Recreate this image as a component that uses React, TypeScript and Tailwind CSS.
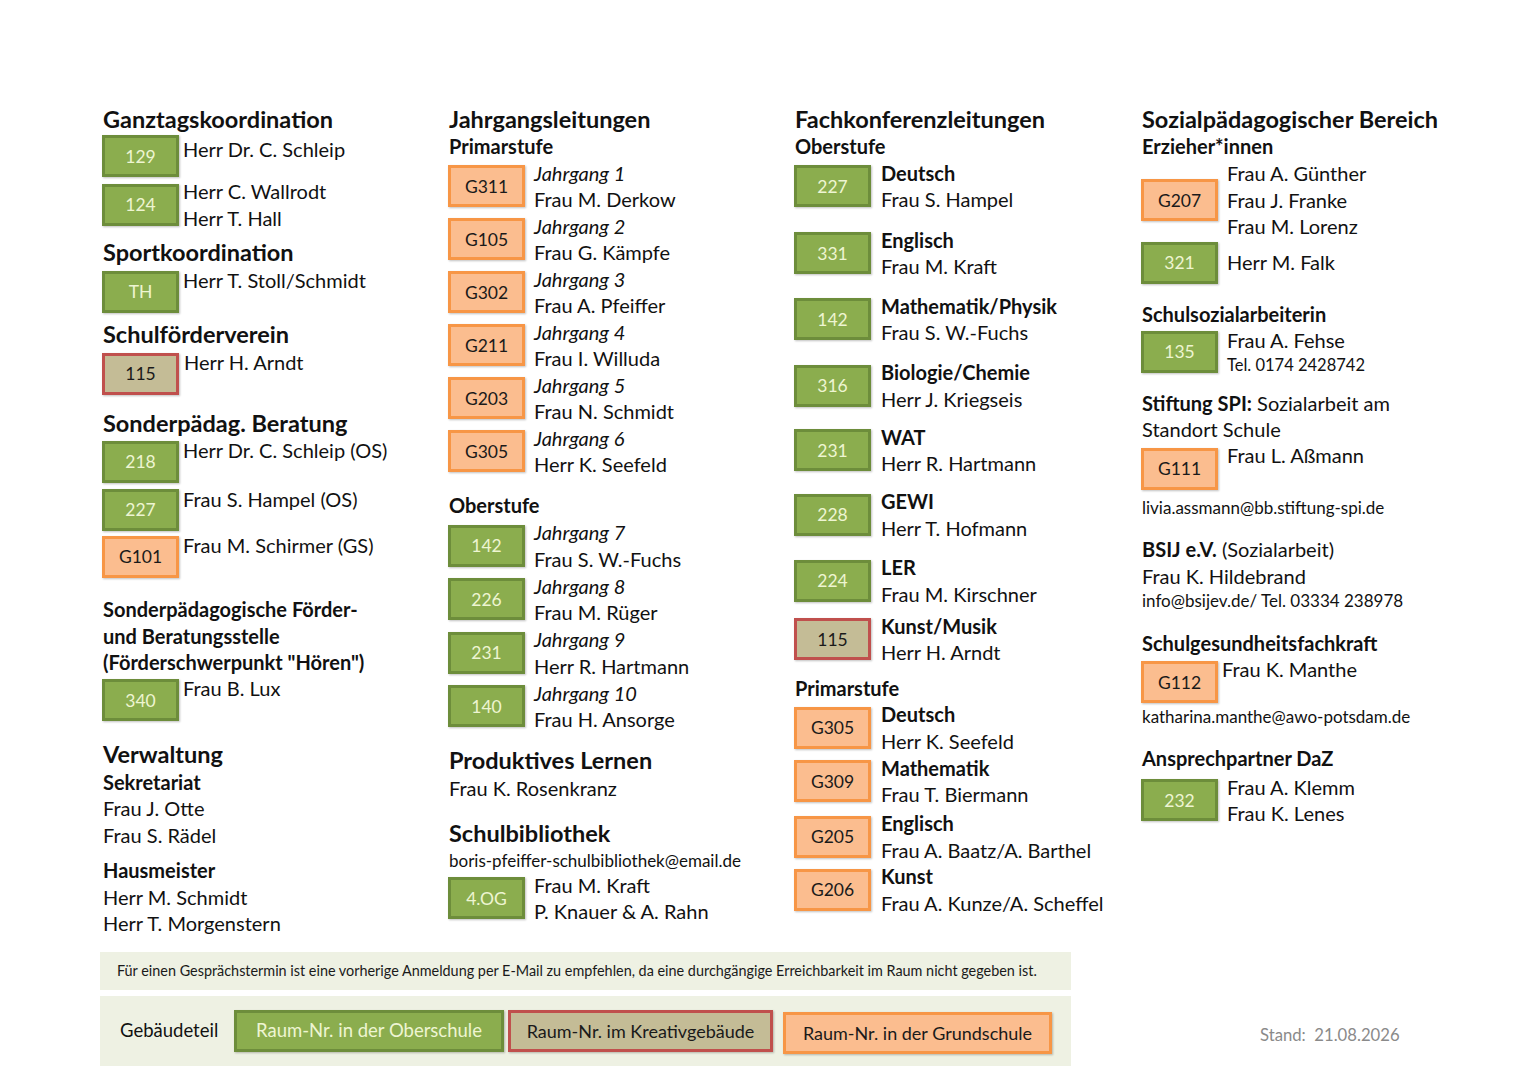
import type { ReactNode } from 'react';
import clsx from 'clsx';

type Kind = 'g' | 'o' | 'k';

const roomStyles: Record<Kind, string> = {
  g: 'border-[#6d8d3b] bg-[#8bad4e] text-[#eef5d2]',
  o: 'border-[#f79646] bg-[#fbbd8f] text-[#1a1a1a]',
  k: 'border-[#c0504d] bg-[#c4bc96] text-[#1a1a1a]',
};

function Room({ id, kind, className }: { id: string; kind: Kind; className?: string }) {
  return (
    <div
      className={clsx(
        'flex h-[42px] w-[77px] shrink-0 items-center justify-center border-[3px] pt-[2px] text-[17.5px] shadow-[1px_1px_2px_rgba(0,0,0,0.25)]',
        roomStyles[kind],
        className,
      )}
    >
      {id}
    </div>
  );
}

interface RowProps {
  id: string;
  kind: Kind;
  lines: ReactNode[];
  className?: string;
  textClass?: string;
  center?: boolean;
}

// single-line rows hang from the box top, multi-line rows centre the box
function Row({ id, kind, lines, className, textClass = 'ml-[4px]', center }: RowProps) {
  const centred = center ?? lines.length > 1;
  return (
    <div className={clsx('flex', centred ? 'items-center' : 'items-start', className)}>
      <Room id={id} kind={kind} />
      <div className={clsx('text-[20px] leading-[26.5px]', textClass)}>
        {lines.map((line, i) => (
          <div key={i}>{line}</div>
        ))}
      </div>
    </div>
  );
}

function H({ children, className }: { children: ReactNode; className?: string }) {
  return <div className={clsx('pl-[1px] text-[23.5px] font-bold leading-[30px]', className)}>{children}</div>;
}

function S({ children, className }: { children: ReactNode; className?: string }) {
  return <div className={clsx('pl-[1px] text-[20px] font-bold leading-[26.5px]', className)}>{children}</div>;
}

function P({ children, className }: { children: ReactNode; className?: string }) {
  return <div className={clsx('pl-[1px] text-[20px] leading-[26.5px]', className)}>{children}</div>;
}

function Small({ children, className }: { children: ReactNode; className?: string }) {
  return <div className={clsx('pl-[1px] text-[17px] leading-[22px]', className)}>{children}</div>;
}

const I = ({ children }: { children: ReactNode }) => <span className="italic">{children}</span>;
const B = ({ children }: { children: ReactNode }) => <span className="font-bold">{children}</span>;

function ColumnOne() {
  return (
    <div className="flex flex-col pl-[2px]">
      <H>Ganztagskoordination</H>
      <Row id="129" kind="g" className="mt-[1px]" lines={['Herr Dr. C. Schleip']} textClass="ml-[4px] mt-[1px]" />
      <Row id="124" kind="g" className="mt-[1px]" lines={['Herr C. Wallrodt', 'Herr T. Hall']} />
      <H className="mt-[5.5px]">Sportkoordination</H>
      <Row id="TH" kind="g" className="mt-[4px]" lines={['Herr T. Stoll/Schmidt']} textClass="ml-[4px] -mt-[4px]" />
      <H className="mt-[6px]">Schulförderverein</H>
      <Row id="115" kind="k" className="mt-[4px]" lines={['Herr H. Arndt']} textClass="ml-[5px] -mt-[4px]" />
      <H className="mt-[13px]">Sonderpädag. Beratung</H>
      <Row id="218" kind="g" className="mt-[3px]" lines={['Herr Dr. C. Schleip (OS)']} textClass="ml-[4px] -mt-[4px]" />
      <Row id="227" kind="g" className="mt-[6px]" lines={['Frau S. Hampel (OS)']} textClass="ml-[4px] -mt-[3px]" />
      <Row id="G101" kind="o" className="mt-[5px]" lines={['Frau M. Schirmer (GS)']} textClass="ml-[4px] -mt-[4px]" />
      <S className="mt-[18.5px]">
        Sonderpädagogische Förder-
        <br />
        und Beratungsstelle
        <br />
        (Förderschwerpunkt "Hören")
      </S>
      <Row id="340" kind="g" className="mt-[3.5px]" lines={['Frau B. Lux']} textClass="ml-[4px] -mt-[4px]" />
      <H className="mt-[17.5px]">Verwaltung</H>
      <S>Sekretariat</S>
      <P>
        Frau J. Otte
        <br />
        Frau S. Rädel
      </P>
      <S className="mt-[9px]">Hausmeister</S>
      <P>
        Herr M. Schmidt
        <br />
        Herr T. Morgenstern
      </P>
    </div>
  );
}

function ColumnTwo() {
  const prim: [string, string, string][] = [
    ['G311', 'Jahrgang 1', 'Frau M. Derkow'],
    ['G105', 'Jahrgang 2', 'Frau G. Kämpfe'],
    ['G302', 'Jahrgang 3', 'Frau A. Pfeiffer'],
    ['G211', 'Jahrgang 4', 'Frau I. Willuda'],
    ['G203', 'Jahrgang 5', 'Frau N. Schmidt'],
    ['G305', 'Jahrgang 6', 'Herr K. Seefeld'],
  ];
  const ober: [string, string, string][] = [
    ['142', 'Jahrgang 7', 'Frau S. W.-Fuchs'],
    ['226', 'Jahrgang 8', 'Frau M. Rüger'],
    ['231', 'Jahrgang 9', 'Herr R. Hartmann'],
    ['140', 'Jahrgang 10', 'Frau H. Ansorge'],
  ];
  return (
    <div className="flex flex-col">
      <H>Jahrgangsleitungen</H>
      <S className="-mt-[1px]">Primarstufe</S>
      {prim.map(([id, j, name]) => (
        <Row key={id} id={id} kind="o" lines={[<I>{j}</I>, name]} textClass="ml-[9px]" />
      ))}
      <S className="mt-[14.5px]">Oberstufe</S>
      {ober.map(([id, j, name]) => (
        <Row key={id} id={id} kind="g" className="mt-[0.5px]" lines={[<I>{j}</I>, name]} textClass="ml-[9px]" />
      ))}
      <H className="mt-[12px]">Produktives Lernen</H>
      <P>Frau K. Rosenkranz</P>
      <H className="mt-[17px]">Schulbibliothek</H>
      <Small className="mt-[1.5px]">boris-pfeiffer-schulbibliothek@email.de</Small>
      <Row id="4.OG" kind="g" lines={['Frau M. Kraft', 'P. Knauer & A. Rahn']} textClass="ml-[9px]" />
    </div>
  );
}

function ColumnThree() {
  const ober: [string, Kind, string, string, string][] = [
    ['227', 'g', 'Deutsch', 'Frau S. Hampel', 'mt-0'],
    ['331', 'g', 'Englisch', 'Frau M. Kraft', 'mt-[14px]'],
    ['142', 'g', 'Mathematik/Physik', 'Frau S. W.-Fuchs', 'mt-[13px]'],
    ['316', 'g', 'Biologie/Chemie', 'Herr J. Kriegseis', 'mt-[13.5px]'],
    ['231', 'g', 'WAT', 'Herr R. Hartmann', 'mt-[11.5px]'],
    ['228', 'g', 'GEWI', 'Herr T. Hofmann', 'mt-[11.5px]'],
    ['224', 'g', 'LER', 'Frau M. Kirschner', 'mt-[13px]'],
    ['115', 'k', 'Kunst/Musik', 'Herr H. Arndt', 'mt-[5.5px]'],
  ];
  const prim: [string, string, string, string][] = [
    ['G305', 'Deutsch', 'Herr K. Seefeld', 'mt-0'],
    ['G309', 'Mathematik', 'Frau T. Biermann', 'mt-[0.5px]'],
    ['G205', 'Englisch', 'Frau A. Baatz/A. Barthel', 'mt-[2.5px]'],
    ['G206', 'Kunst', 'Frau A. Kunze/A. Scheffel', 'mt-0'],
  ];
  return (
    <div className="flex flex-col">
      <H>Fachkonferenzleitungen</H>
      <S className="-mt-[1px]">Oberstufe</S>
      {ober.map(([id, kind, subject, name, mt]) => (
        <Row key={id + subject} id={id} kind={kind} className={mt} lines={[<B>{subject}</B>, name]} textClass="ml-[10px]" />
      ))}
      <S className="mt-[9px]">Primarstufe</S>
      {prim.map(([id, subject, name, mt]) => (
        <Row key={id} id={id} kind="o" className={mt} lines={[<B>{subject}</B>, name]} textClass="ml-[10px]" />
      ))}
    </div>
  );
}

function ColumnFour() {
  return (
    <div className="flex flex-col">
      <H>Sozialpädagogischer Bereich</H>
      <S className="-mt-[1px]">Erzieher*innen</S>
      <Row id="G207" kind="o" className="mt-[0.5px]" lines={['Frau A. Günther', 'Frau J. Franke', 'Frau M. Lorenz']} textClass="ml-[9px]" />
      <Row id="321" kind="g" className="mt-[2px]" lines={['Herr M. Falk']} textClass="ml-[9px]" center />
      <S className="mt-[17px]">Schulsozialarbeiterin</S>
      <div className="flex items-start">
        <Room id="135" kind="g" className="mt-[3.5px]" />
        <div className="ml-[9px]">
          <div className="text-[20px] leading-[26.5px]">Frau A. Fehse</div>
          <div className="text-[16.5px] leading-[22px]">Tel. 0174 2428742</div>
        </div>
      </div>
      <P className="mt-[14px]">
        <B>Stiftung SPI:</B> Sozialarbeit am
        <br />
        Standort Schule
      </P>
      <Row id="G111" kind="o" className="mt-[5px]" lines={['Frau L. Aßmann']} textClass="ml-[9px] -mt-[6px]" />
      <Small className="mt-[7px]">livia.assmann@bb.stiftung-spi.de</Small>
      <P className="mt-[17.5px]">
        <B>BSIJ e.V.</B> (Sozialarbeit)
        <br />
        Frau K. Hildebrand
      </P>
      <Small className="mt-[1px]">info@bsijev.de/ Tel. 03334 238978</Small>
      <S className="mt-[18px]">Schulgesundheitsfachkraft</S>
      <Row id="G112" kind="o" className="mt-[4.5px]" lines={['Frau K. Manthe']} textClass="ml-[4px] -mt-[5px]" />
      <Small className="mt-[2.5px]">katharina.manthe@awo-potsdam.de</Small>
      <S className="mt-[17.5px]">Ansprechpartner DaZ</S>
      <Row id="232" kind="g" className="mt-[2px]" lines={['Frau A. Klemm', 'Frau K. Lenes']} textClass="ml-[9px]" />
    </div>
  );
}

function Legend() {
  return (
    <div className="flex items-end">
      <div className="flex w-[971px] flex-col gap-[6px]">
        <div className="flex h-[38px] items-center bg-[#eef1e3] pl-[17px] text-[14.4px] text-[#1a1a1a]">
          Für einen Gesprächstermin ist eine vorherige Anmeldung per E-Mail zu empfehlen, da eine durchgängige Erreichbarkeit im Raum nicht gegeben ist.
        </div>
        <div className="flex h-[70px] items-center bg-[#eef1e3] pl-[20px] text-[18px]">
          <div className="w-[114px] text-[18.5px]">Gebäudeteil</div>
          <div className="flex h-[42px] w-[270px] items-center justify-center border-[3px] border-[#6d8d3b] bg-[#8bad4e] text-[18.5px] text-[#eef5d2] shadow-[1px_1px_2px_rgba(0,0,0,0.25)]">
            Raum-Nr. in der Oberschule
          </div>
          <div className="ml-[4px] flex h-[42px] w-[265px] items-center justify-center border-[3px] border-[#c0504d] bg-[#c4bc96] text-[#1a1a1a] shadow-[1px_1px_2px_rgba(0,0,0,0.25)]">
            Raum-Nr. im Kreativgebäude
          </div>
          <div className="ml-[10px] mt-[4px] flex h-[42px] w-[269px] items-center justify-center border-[3px] border-[#f79646] bg-[#fbbd8f] text-[#1a1a1a] shadow-[1px_1px_2px_rgba(0,0,0,0.25)]">
            Raum-Nr. in der Grundschule
          </div>
        </div>
      </div>
      <div className="mb-[18px] ml-[189px] text-[16.7px] text-[#8a8a8a]">Stand:&nbsp; 21.08.2026</div>
    </div>
  );
}

export default function App() {
  return (
    <div className="min-h-[1080px] w-[1527px] bg-white pl-[100px] pt-[104px] font-['Lato','Liberation_Sans',sans-serif] text-[#111]">
      <div className="grid h-[848px] grid-cols-[348px_346px_347px_346px]">
        <ColumnOne />
        <ColumnTwo />
        <ColumnThree />
        <ColumnFour />
      </div>
      <Legend />
    </div>
  );
}
